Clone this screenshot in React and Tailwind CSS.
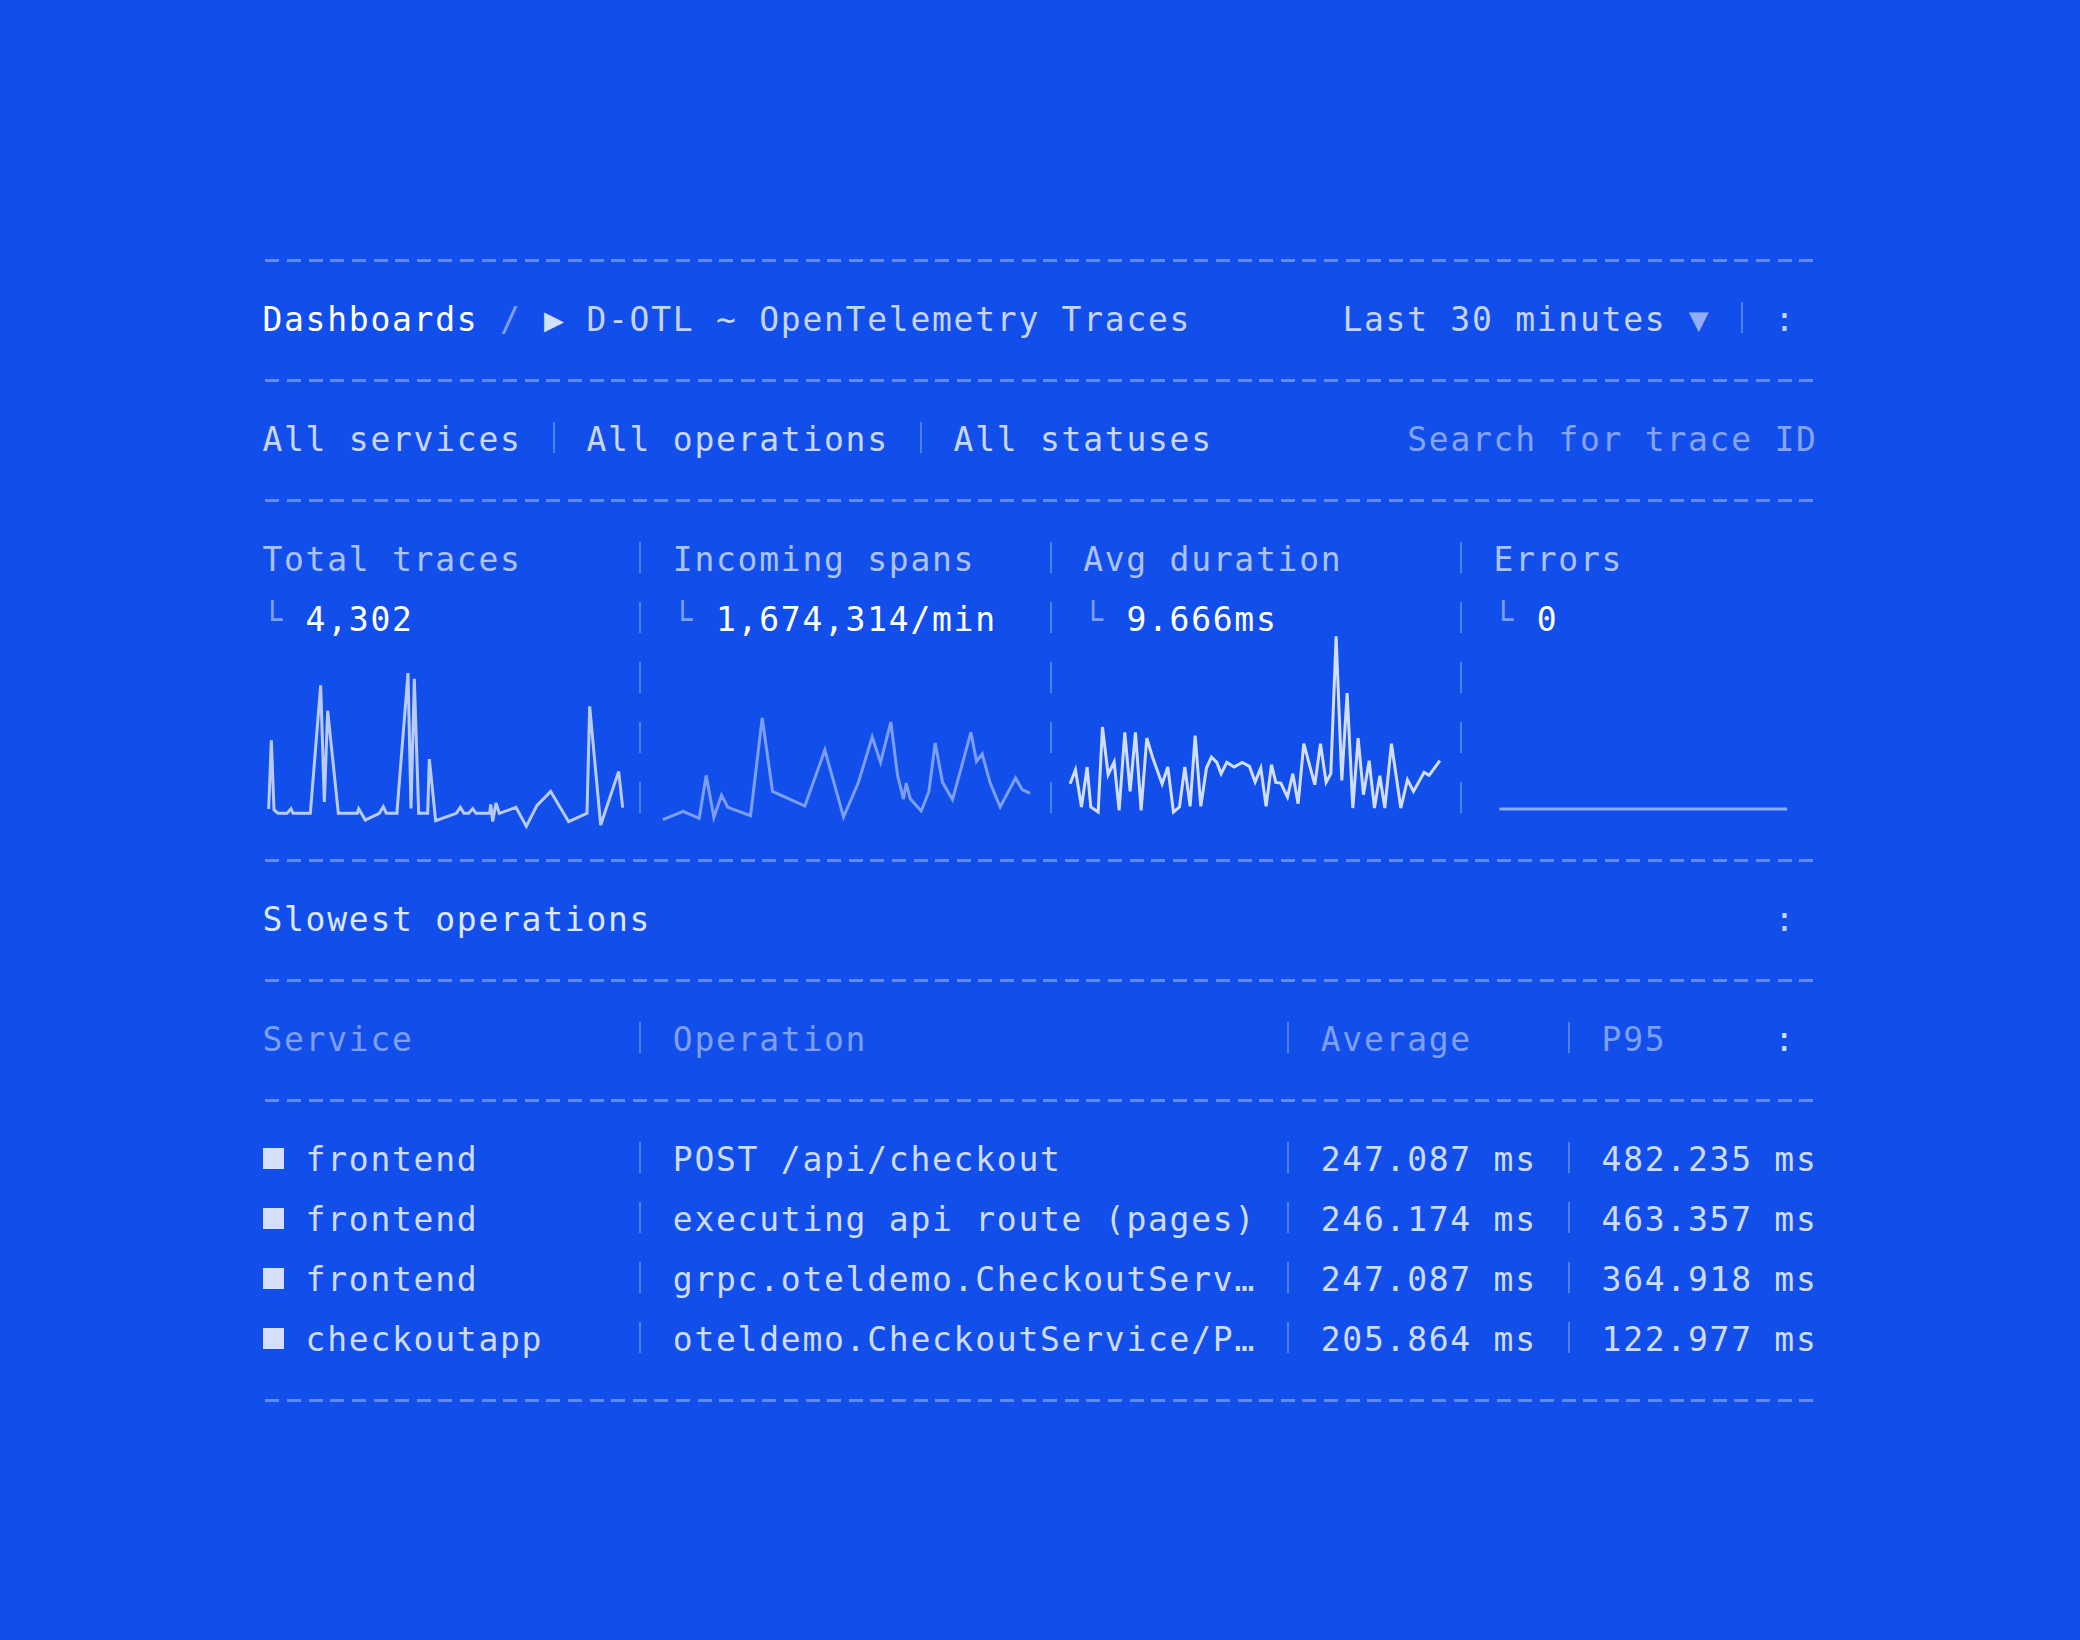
import React from "react";

// one terminal cell = 21.6px (33px DejaVu Sans Mono + tracking)
const chart1 =
  "20,508 28,302 36,510 48,521 75,521 87,507 93,521 145,521 176,137 187,487 197,213 229,521 286,521 290,507 310,541 352,521 364,501 373,521 405,521 406,503 438,100 447,506 457,117 470,521 497,521 502,358 521,543 583,521 595,503 606,521 620,521 632,507 642,521 683,521 686,494 692,545 702,490 712,521 762,503 793,560 825,497 866,455 920,546 975,521 983,200 1016,556 1070,395 1082,504";

const chart2 =
  "38,540 99,515 147,536 168,407 191,533 214,467 233,503 301,528 336,235 367,455 464,499 524,331 580,532 624,430 666,292 691,368 722,247 742,407 760,478 768,430 780,477 813,514 836,456 855,310 877,428 907,480 962,278 979,365 996,343 1020,430 1050,502 1096,415 1116,450 1140,461";

const chart3 =
  "28,492 44,450 62,562 79,442 90,562 112,577 125,322 142,465 160,427 175,572 192,338 208,515 224,338 241,572 258,355 275,412 304,493 321,442 338,577 356,562 372,442 388,560 403,348 420,560 437,445 452,412 468,428 481,462 498,428 520,442 544,428 566,440 583,487 600,445 616,560 632,435 645,488 660,490 680,532 696,462 712,552 729,372 762,495 779,372 796,488 810,462 826,50 843,482 859,220 876,565 892,355 908,525 925,423 941,565 957,468 972,565 992,372 1020,565 1040,480 1058,515 1090,458 1105,467 1137,423";

const rows = [
  { service: "frontend", op: "POST /api/checkout", avg: "247.087 ms", p95: "482.235 ms" },
  { service: "frontend", op: "executing api route (pages)", avg: "246.174 ms", p95: "463.357 ms" },
  { service: "frontend", op: "grpc.oteldemo.CheckoutServ…", avg: "247.087 ms", p95: "364.918 ms" },
  { service: "checkoutapp", op: "oteldemo.CheckoutService/P…", avg: "205.864 ms", p95: "122.977 ms" },
];

function Dashes() {
  return (
    <div className="flex h-[60px] items-center">
      <div className="h-[3px] w-full bg-[image:repeating-linear-gradient(90deg,transparent_0px,transparent_3.5px,#5d8af3_3.5px,#5d8af3_17.5px,transparent_17.5px,transparent_21.6px)]" />
    </div>
  );
}

function Sep() {
  return (
    <div className="flex h-[60px] w-[21.6px] shrink-0 justify-center pt-[12px]">
      <div className="h-[31px] w-[2px] bg-[#4f7ff1]" />
    </div>
  );
}

function SepCol() {
  return (
    <div className="flex shrink-0 flex-col">
      <Sep />
      <Sep />
      <Sep />
      <Sep />
      <Sep />
    </div>
  );
}

function Glyph({ children, className }) {
  return (
    <span className={`inline-block w-[21.6px] text-center tracking-normal ${className}`}>
      {children}
    </span>
  );
}

function Trace({ points, tx, ty, color }) {
  return (
    <svg width="100%" height="180" className="block overflow-visible">
      <g transform={`translate(${tx} ${ty}) scale(0.333333)`}>
        <polyline
          points={points}
          fill="none"
          stroke={color}
          strokeWidth={3}
          vectorEffect="non-scaling-stroke"
        />
      </g>
    </svg>
  );
}

function Metric({ className, label, value, children }) {
  return (
    <div className={`shrink-0 ${className}`}>
      <div className="h-[60px] text-[#adc2f9]">{label}</div>
      <div className="h-[60px]">
        <span className="text-[#7c9ff5]">└ </span>
        <span className="text-white">{value}</span>
      </div>
      {children}
    </div>
  );
}

function Row({ service, op, avg, p95 }) {
  return (
    <div className="flex h-[60px] text-[#cfdbfc]">
      <div className="flex w-[367.2px] shrink-0">
        <div className="w-[21.6px] pl-[1px] pt-[18px]">
          <div className="h-[21px] w-[21px] bg-[#d3dffd]" />
        </div>
        <span>{" " + service}</span>
      </div>
      <Sep />
      <div className="w-[626.4px] shrink-0">{" " + op}</div>
      <Sep />
      <div className="w-[259.2px] shrink-0">{" " + avg}</div>
      <Sep />
      <div className="w-[237.6px] shrink-0">{" " + p95}</div>
    </div>
  );
}

export default function App() {
  return (
    <div className="h-screen w-full overflow-hidden bg-[#124fea] pt-[230px]">
      <div className="mx-auto w-[1555.2px] whitespace-pre font-['DejaVu_Sans_Mono',monospace] text-[33px] leading-[60px] tracking-[1.732px]">
        <Dashes />

        {/* breadcrumb + time range */}
        <div className="flex h-[60px] justify-between">
          <div>
            <span className="text-white">Dashboards</span>
            <span className="text-[#7f9ff4]"> / </span>
            <Glyph className="text-[#d3dffd]">▶</Glyph>
            <span className="text-[#c6d4fb]"> D-OTL ~ OpenTelemetry Traces</span>
          </div>
          <div className="flex">
            <span className="text-[#c6d4fb]">Last 30 minutes </span>
            <Glyph className="text-[#93aef7]">▼</Glyph>
            <span> </span>
            <Sep />
            <span className="text-[#c6d4fb]"> : </span>
          </div>
        </div>

        <Dashes />

        {/* filters */}
        <div className="flex h-[60px] justify-between">
          <div className="flex text-[#c9d7fb]">
            <span>All services </span>
            <Sep />
            <span> All operations </span>
            <Sep />
            <span> All statuses</span>
          </div>
          <span className="text-[#86a4f5]">Search for trace ID</span>
        </div>

        <Dashes />

        {/* metrics */}
        <div className="flex">
          <Metric className="w-[367.2px]" label="Total traces" value="4,302">
            <Trace points={chart1} tx={0} ty={-10.3} color="#b9cbfa" />
          </Metric>
          <SepCol />
          <Metric className="w-[388.8px] pl-[21.6px]" label="Incoming spans" value="1,674,314/min">
            <div className="-ml-[21.6px]">
              <Trace points={chart2} tx={-0.8} ty={-10.3} color="#7c9ef5" />
            </div>
          </Metric>
          <SepCol />
          <Metric className="w-[388.8px] pl-[21.6px]" label="Avg duration" value="9.666ms">
            <div className="-ml-[21.6px]">
              <Trace points={chart3} tx={-1.2} ty={-30.3} color="#d2defd" />
            </div>
          </Metric>
          <SepCol />
          <Metric className="w-[345.6px] pl-[21.6px]" label="Errors" value="0">
            <div className="-ml-[21.6px]">
              <svg width="100%" height="180" className="block overflow-visible">
                <line x1="27.4" y1="159" x2="315.1" y2="159" stroke="#8eabf6" strokeWidth={3} />
              </svg>
            </div>
          </Metric>
        </div>

        <Dashes />

        <div className="flex h-[60px] justify-between">
          <span className="text-[#dde6fd]">Slowest operations</span>
          <span className="text-[#c6d4fb]">: </span>
        </div>

        <Dashes />

        {/* table header */}
        <div className="flex h-[60px] text-[#7f9ff4]">
          <div className="w-[367.2px] shrink-0">Service</div>
          <Sep />
          <div className="w-[626.4px] shrink-0"> Operation</div>
          <Sep />
          <div className="w-[259.2px] shrink-0"> Average</div>
          <Sep />
          <div className="w-[237.6px] shrink-0">
            <span> P95     </span>
            <span className="text-[#d3dffd]">: </span>
          </div>
        </div>

        <Dashes />

        {rows.map((r, i) => (
          <Row key={i} {...r} />
        ))}

        <Dashes />
      </div>
    </div>
  );
}
